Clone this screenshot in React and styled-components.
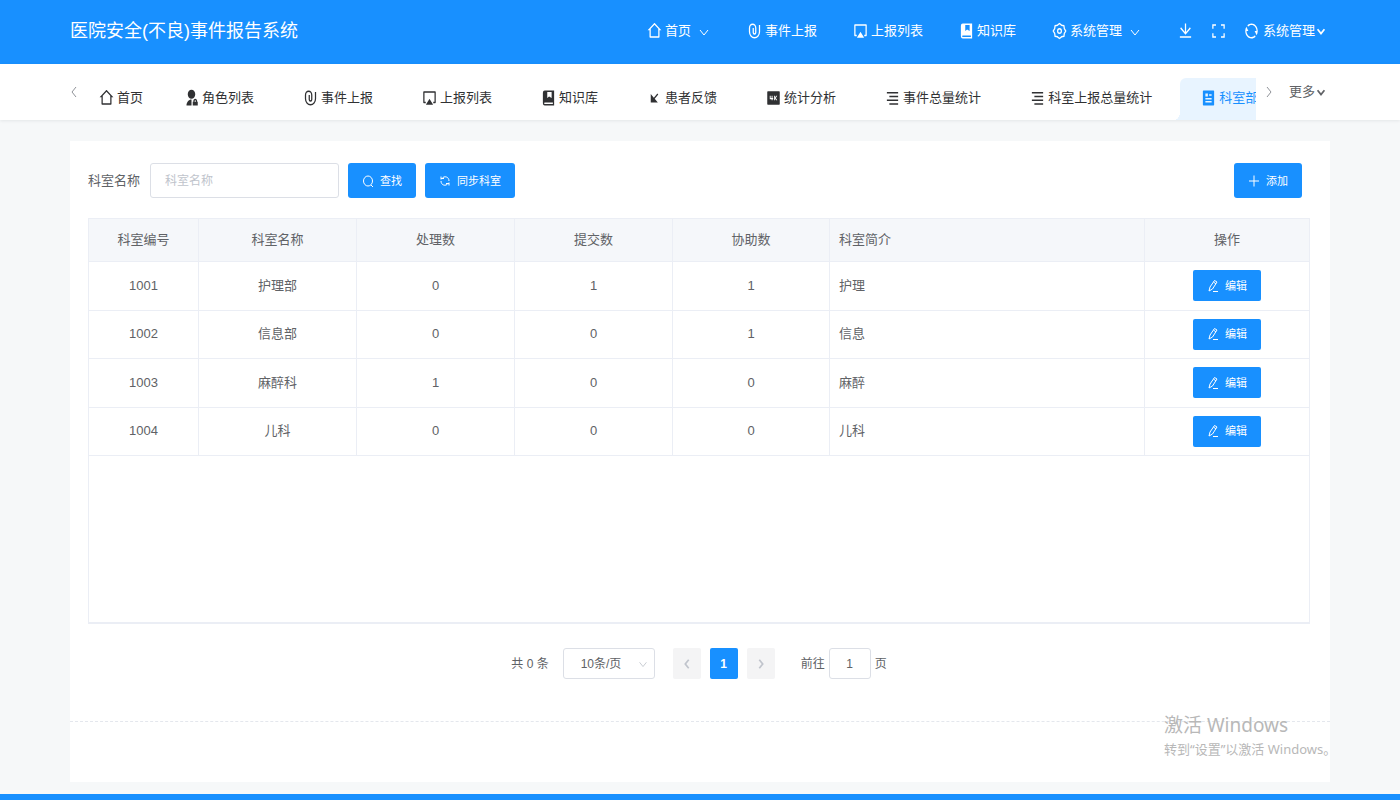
import styled, { createGlobalStyle } from "styled-components"
import {
    Ri4kFill,
    RiAdminFill,
    RiAirplayFill,
    RiAlignRight,
    RiArrowLeftDownFill,
    RiArticleFill,
    RiDownloadLine,
    RiFullscreenLine,
    RiHome2Line,
    RiRefreshLine,
} from "react-icons/ri"
import { useState } from "react";

function ClipIcon(props) {
    return (
        <svg viewBox="0 0 24 24" fill="none" stroke="currentColor" strokeWidth="2" aria-hidden="true" {...props}>
            <path d="M20 4v9a8 8 0 0 1-16 0V8a5 5 0 0 1 10 0v6a2 2 0 0 1-4 0V8" />
        </svg>
    )
}

function BookIcon(props) {
    return (
        <svg viewBox="0 0 24 24" fill="currentColor" fillRule="evenodd" aria-hidden="true" {...props}>
            <path d="M6 2h15v20H6a3 3 0 0 1-3-3V5a3 3 0 0 1 3-3zM6 18a1 1 0 0 0 0 2h13v-2zM10 4v8l3-2 4 2V4z" />
        </svg>
    )
}

function GearIcon(props) {
    return (
        <svg viewBox="0 0 24 24" fill="none" stroke="currentColor" strokeWidth="2" strokeLinejoin="round" aria-hidden="true" {...props}>
            <path d="M22 12l-2.300 3.200-.600 3.900-3.900.600L12 22l-3.200-2.300-3.900-.600-.600-3.900L2 12l2.300-3.200.600-3.900 3.900-.600L12 2l3.200 2.300 3.900.600.600 3.900z" />
            <circle cx="12" cy="12" r="3" />
        </svg>
    )
}

const navItems = [
    { text: '首页', icon: RiHome2Line, hasMenu: true },
    { text: '事件上报', icon: ClipIcon },
    { text: '上报列表', icon: RiAirplayFill },
    { text: '知识库', icon: BookIcon },
    { text: '系统管理', icon: GearIcon, hasMenu: true },
]

const tabs = [
    { text: '首页', icon: RiHome2Line, fixed: true },
    { text: '角色列表', icon: RiAdminFill },
    { text: '事件上报', icon: ClipIcon },
    { text: '上报列表', icon: RiAirplayFill },
    { text: '知识库', icon: BookIcon },
    { text: '患者反馈', icon: RiArrowLeftDownFill },
    { text: '统计分析', icon: Ri4kFill },
    { text: '事件总量统计', icon: RiAlignRight },
    { text: '科室上报总量统计', icon: RiAlignRight },
    { text: '科室部门', icon: RiArticleFill },
]

const columns = [
    { key: 'id', title: '科室编号', width: 110 },
    { key: 'name', title: '科室名称', width: 158 },
    { key: 'handled', title: '处理数', width: 158 },
    { key: 'submitted', title: '提交数', width: 158 },
    { key: 'assisted', title: '协助数', width: 157 },
    { key: 'intro', title: '科室简介', width: 315, align: 'left' },
    { key: 'action', title: '操作', width: 164 },
]

const departments = [
    { id: 1001, name: '护理部', handled: 0, submitted: 1, assisted: 1, intro: '护理' },
    { id: 1002, name: '信息部', handled: 0, submitted: 0, assisted: 1, intro: '信息' },
    { id: 1003, name: '麻醉科', handled: 1, submitted: 0, assisted: 0, intro: '麻醉' },
    { id: 1004, name: '儿科', handled: 0, submitted: 0, assisted: 0, intro: '儿科' },
]

const chevrons = {
    down: 'M3 5l4 5 4-5',
    left: 'M9 2L5 7l4 5',
    right: 'M5 2l4 5-4 5',
}

function Chevron({ to, size = 14, weight = 1 }) {
    return (
        <svg width={size} height={size} viewBox="0 0 14 14" fill="none" stroke="currentColor" strokeWidth={weight} aria-hidden="true">
            <path d={chevrons[to]} />
        </svg>
    )
}

function ButtonIcon({ children }) {
    return (
        <svg width="12" height="14" viewBox="0 0 12 14" fill="none" stroke="currentColor" strokeWidth="1" aria-hidden="true">
            {children}
        </svg>
    )
}

function DepartmentTable() {
    return (
        <TableBox>
            <Table>
                <colgroup>
                    {columns.map((column) => <Column key={column.key} $width={column.width} />)}
                </colgroup>
                <thead>
                    <tr>
                        {columns.map((column) => (
                            <HeadCell key={column.key} $align={column.align}>{column.title}</HeadCell>
                        ))}
                    </tr>
                </thead>
                <tbody>
                    {departments.map((row) => (
                        <tr key={row.id}>
                            {columns.map((column) => (
                                <Cell key={column.key} $align={column.align}>
                                    {column.key === 'action' ?
                                        <Button $small>
                                            <ButtonIcon>
                                                <path d="M2 12l1-4 4.500-6.500 2.500 1.500-4.500 7L2 12zM6.500 3l2.500 2M6 12.500h5" />
                                            </ButtonIcon>
                                            编辑
                                        </Button>
                                        : row[column.key]
                                    }
                                </Cell>
                            ))}
                        </tr>
                    ))}
                </tbody>
            </Table>
        </TableBox>
    )
}

function Pager() {
    const [page, setPage] = useState('1');

    return (
        <Pagination>
            <Total>共 0 条</Total>
            <SelectBox>
                <PageSize aria-label="每页条数">
                    <option>10条/页</option>
                </PageSize>
                <SelectArrow><Chevron to="down" size={12} /></SelectArrow>
            </SelectBox>
            <Pages>
                <PageButton disabled aria-label="上一页"><Chevron to="left" weight={2} size={12} /></PageButton>
                <PageButton $active>1</PageButton>
                <PageButton disabled aria-label="下一页"><Chevron to="right" weight={2} size={12} /></PageButton>
            </Pages>
            <Jump>
                前往
                <JumpInput value={page} onChange={(e) => setPage(e.target.value)} />
                页
            </Jump>
        </Pagination>
    )
}

function App() {
    const [keyword, setKeyword] = useState('');
    const [active, setActive] = useState('科室部门');

    return (
        <Page>
            <GlobalStyle />
            <Header>
                <Title>医院安全(不良)事件报告系统</Title>
                <Nav>
                    {navItems.map(({ text, icon: Icon, hasMenu }) => (
                        <NavLink href="#" key={text}>
                            <Icon preserveAspectRatio="none" />
                            {text}
                            {hasMenu && <MenuArrow><Chevron to="down" /></MenuArrow>}
                        </NavLink>
                    ))}
                </Nav>
                <Tools>
                    <IconButton aria-label="下载"><RiDownloadLine preserveAspectRatio="none" /></IconButton>
                    <IconButton aria-label="全屏"><RiFullscreenLine preserveAspectRatio="none" /></IconButton>
                    <IconButton>
                        <RiRefreshLine preserveAspectRatio="none" />
                        系统管理
                        <Chevron to="down" size={12} weight={2} />
                    </IconButton>
                </Tools>
            </Header>

            <TabBar>
                <ScrollButton aria-label="向左"><Chevron to="left" /></ScrollButton>
                <TabList>
                    {tabs.map(({ text, icon: Icon, fixed }) => (
                        <Tab key={text} $active={active === text} $fixed={fixed} onClick={() => setActive(text)}>
                            <Icon preserveAspectRatio="none" />
                            {text}
                        </Tab>
                    ))}
                </TabList>
                <ScrollButton $next aria-label="向右"><Chevron to="right" /></ScrollButton>
                <More>更多<Chevron to="down" size={12} weight={2} /></More>
            </TabBar>

            <Card>
                <Content>
                    <Toolbar>
                        <Label htmlFor="keyword">科室名称</Label>
                        <SearchInput
                            id="keyword"
                            placeholder="科室名称"
                            value={keyword}
                            onChange={(e) => setKeyword(e.target.value)}
                        />
                        <Button>
                            <ButtonIcon>
                                <ellipse cx="6" cy="7" rx="4.500" ry="5" />
                                <path d="M9 11l2 2" />
                            </ButtonIcon>
                            查找
                        </Button>
                        <Button>
                            <ButtonIcon>
                                <path d="M2 5.500V2.500M2 4.500h3M3 4.500C5 1.500 10 2.500 10 7M10 8.500v3M10 9.500H7M9 9.500C7 12.500 2 11.500 2 7" />
                            </ButtonIcon>
                            同步科室
                        </Button>
                        <Spacer />
                        <AddButton>
                            <ButtonIcon><path d="M6 1.500v11M1 7h10" /></ButtonIcon>
                            添加
                        </AddButton>
                    </Toolbar>
                    <DepartmentTable />
                    <Pager />
                </Content>
                <CardFooter />
            </Card>
            <BottomBar />

            <Watermark>
                <WatermarkTitle>激活 Windows</WatermarkTitle>
                <WatermarkText>转到“设置”以激活 Windows。</WatermarkText>
            </Watermark>
        </Page>
    )
}

export default App


const GlobalStyle = createGlobalStyle`
    * {
        box-sizing: border-box;
    }
    body {
        margin: 0;
        background: #f6f8f9;
    }
    body, button, input, select {
        font-family: "Liberation Sans", "Noto Sans CJK SC", sans-serif;
        font-size: 13px;
        line-height: 20px;
    }
    button {
        padding: 0;
        border: none;
        background: none;
        color: inherit;
        cursor: pointer;
        white-space: nowrap;
    }
    svg {
        display: block;
        flex-shrink: 0;
    }
`

const Page = styled.div`
    position: relative;
    display: flex;
    flex-direction: column;
    min-height: 100vh;
    color: #606266;
`

const Header = styled.header`
    display: flex;
    align-items: center;
    height: 64px;
    padding: 0 5% 2px;
    background: #1890ff;
    color: #fff;
`

const Title = styled.h1`
    flex: 1;
    margin: 0;
    font-size: 18px;
    font-weight: 400;
    line-height: 28px;
    white-space: nowrap;
`

const Nav = styled.nav`
    display: flex;
    gap: 36px;
    margin-right: 36px;
`

const NavLink = styled.a`
    display: flex;
    align-items: center;
    gap: 3px;
    color: #fff;
    text-decoration: none;
    white-space: nowrap;
    > svg {
        width: 15px;
        height: 18px;
    }
`

const MenuArrow = styled.span`
    padding: 2px 0 0 3px;
`

const Tools = styled.div`
    display: flex;
    gap: 18px;
    padding-right: 3px;
`

const IconButton = styled.button`
    display: flex;
    align-items: center;
    > svg:first-child {
        width: 15px;
        height: 18px;
    }
    > svg:first-child:not(:last-child) {
        margin-right: 4px;
    }
`

const TabBar = styled.div`
    display: flex;
    align-items: center;
    height: 56px;
    padding: 0 5%;
    background: #fff;
    box-shadow: 0 1px 3px rgba(0, 21, 41, 0.08);
`

const ScrollButton = styled.button`
    width: ${props => props.$next ? '26px' : '8px'};
    display: flex;
    justify-content: center;
    color: #909399;
`

const TabList = styled.div`
    display: flex;
    flex: 1;
    gap: 7px;
    min-width: 0;
    align-self: flex-end;
    overflow: hidden;
`

const Tab = styled.button`
    position: relative;
    display: flex;
    flex-shrink: 0;
    align-items: center;
    gap: 3px;
    height: 42px;
    padding: 0 ${props => props.$fixed ? '13px' : '21px'} 2px 21px;
    border-radius: 6px 6px 0 0;
    background: ${props => props.$active ? '#e8f4ff' : 'transparent'};
    color: ${props => props.$active ? '#1890ff' : '#303133'};
    > svg {
        width: 15px;
        height: 18px;
    }
    &::before {
        content: "";
        display: ${props => props.$active ? 'block' : 'none'};
        position: absolute;
        left: -6px;
        bottom: 0;
        width: 6px;
        height: 8px;
        background: radial-gradient(ellipse at 0 0, transparent 70%, #e8f4ff 72%);
    }
`

const More = styled.button`
    display: flex;
    align-items: center;
    margin: 0 3px 0 7px;
`

const Card = styled.main`
    flex: 1;
    margin: 21px 5% 12px;
    background: #fff;
`

const Content = styled.div`
    padding: 22px 20px 42px 18px;
`

const Toolbar = styled.div`
    display: flex;
    align-items: center;
    gap: 9px;
    margin-bottom: 20px;
`

const Label = styled.label`
    margin-right: 1px;
    white-space: nowrap;
`

const SearchInput = styled.input`
    width: 189px;
    height: 35px;
    padding: 0 14px;
    border: 1px solid #dcdfe6;
    border-radius: 3px;
    font-size: 12px;
    color: #606266;
    outline: none;
    &::placeholder {
        color: #c0c4cc;
    }
`

const Button = styled.button`
    display: inline-flex;
    align-items: center;
    gap: 6px;
    height: ${props => props.$small ? '31px' : '35px'};
    padding: 0 14px;
    border-radius: ${props => props.$small ? '2px' : '3px'};
    background: #1890ff;
    color: #fff;
    font-size: 11px;
    vertical-align: middle;
    &:hover{
        opacity: 0.8;
    }
`

const AddButton = styled(Button)`
    margin-right: 8px;
`

const Spacer = styled.div`
    flex: 1;
`

const TableBox = styled.div`
    height: 406px;
    border: 1px solid #ebeef5;
    border-bottom-width: 2px;
`

const Table = styled.table`
    width: 100%;
    height: 237px;
    table-layout: fixed;
    border-collapse: separate;
    border-spacing: 0;
    th:last-child, td:last-child {
        border-right: none;
    }
`

const Column = styled.col`
    width: ${props => props.$width}px;
`

const HeadCell = styled.th`
    height: 43px;
    padding: 0 9px;
    border-right: 1px solid #ebeef5;
    border-bottom: 1px solid #ebeef5;
    background: #f5f7fa;
    font-weight: 400;
    text-align: ${props => props.$align || 'center'};
`

const Cell = styled.td`
    padding: 0 9px;
    border-right: 1px solid #ebeef5;
    border-bottom: 1px solid #ebeef5;
    text-align: ${props => props.$align || 'center'};
`

const Pagination = styled.div`
    display: flex;
    align-items: center;
    justify-content: center;
    margin-top: 24px;
    font-size: 12px;
`

const Total = styled.span`
    margin-right: 14px;
`

const SelectBox = styled.div`
    position: relative;
    margin-right: 18px;
`

const PageSize = styled.select`
    display: block;
    width: 92px;
    height: 31px;
    padding: 0 17px;
    border: 1px solid #dcdfe6;
    border-radius: 3px;
    background: #fff;
    color: #606266;
    font-size: 12px;
    appearance: none;
`

const SelectArrow = styled.span`
    position: absolute;
    top: 10px;
    right: 6px;
    color: #c0c4cc;
    pointer-events: none;
`

const Pages = styled.div`
    display: flex;
    gap: 9px;
    margin-right: 26px;
`

const PageButton = styled.button`
    display: flex;
    align-items: center;
    justify-content: center;
    width: 28px;
    height: 31px;
    border-radius: 2px;
    background: ${props => props.$active ? '#1890ff' : '#f4f4f5'};
    color: ${props => props.$active ? '#fff' : '#c0c4cc'};
    font-size: 12px;
    font-weight: ${props => props.$active ? 700 : 400};
`

const Jump = styled.label`
    display: flex;
    align-items: center;
    gap: 4px;
`

const JumpInput = styled.input`
    width: 42px;
    height: 31px;
    padding: 0;
    border: 1px solid #dcdfe6;
    border-radius: 3px;
    color: #606266;
    font-size: 12px;
    text-align: center;
`

const CardFooter = styled.footer`
    height: 61px;
    border-top: 1px dashed #e4e7ed;
`

const BottomBar = styled.div`
    height: 6px;
    background: #1890ff;
`

const Watermark = styled.div`
    position: absolute;
    right: 60px;
    bottom: 41px;
    width: 176px;
    color: #b8b8b8;
    font-family: "Noto Sans", "Noto Sans CJK SC", sans-serif;
    white-space: nowrap;
    pointer-events: none;
`

const WatermarkTitle = styled.div`
    font-size: 19px;
    line-height: 28px;
`

const WatermarkText = styled.div`
    font-size: 13px;
    line-height: 20px;
`
